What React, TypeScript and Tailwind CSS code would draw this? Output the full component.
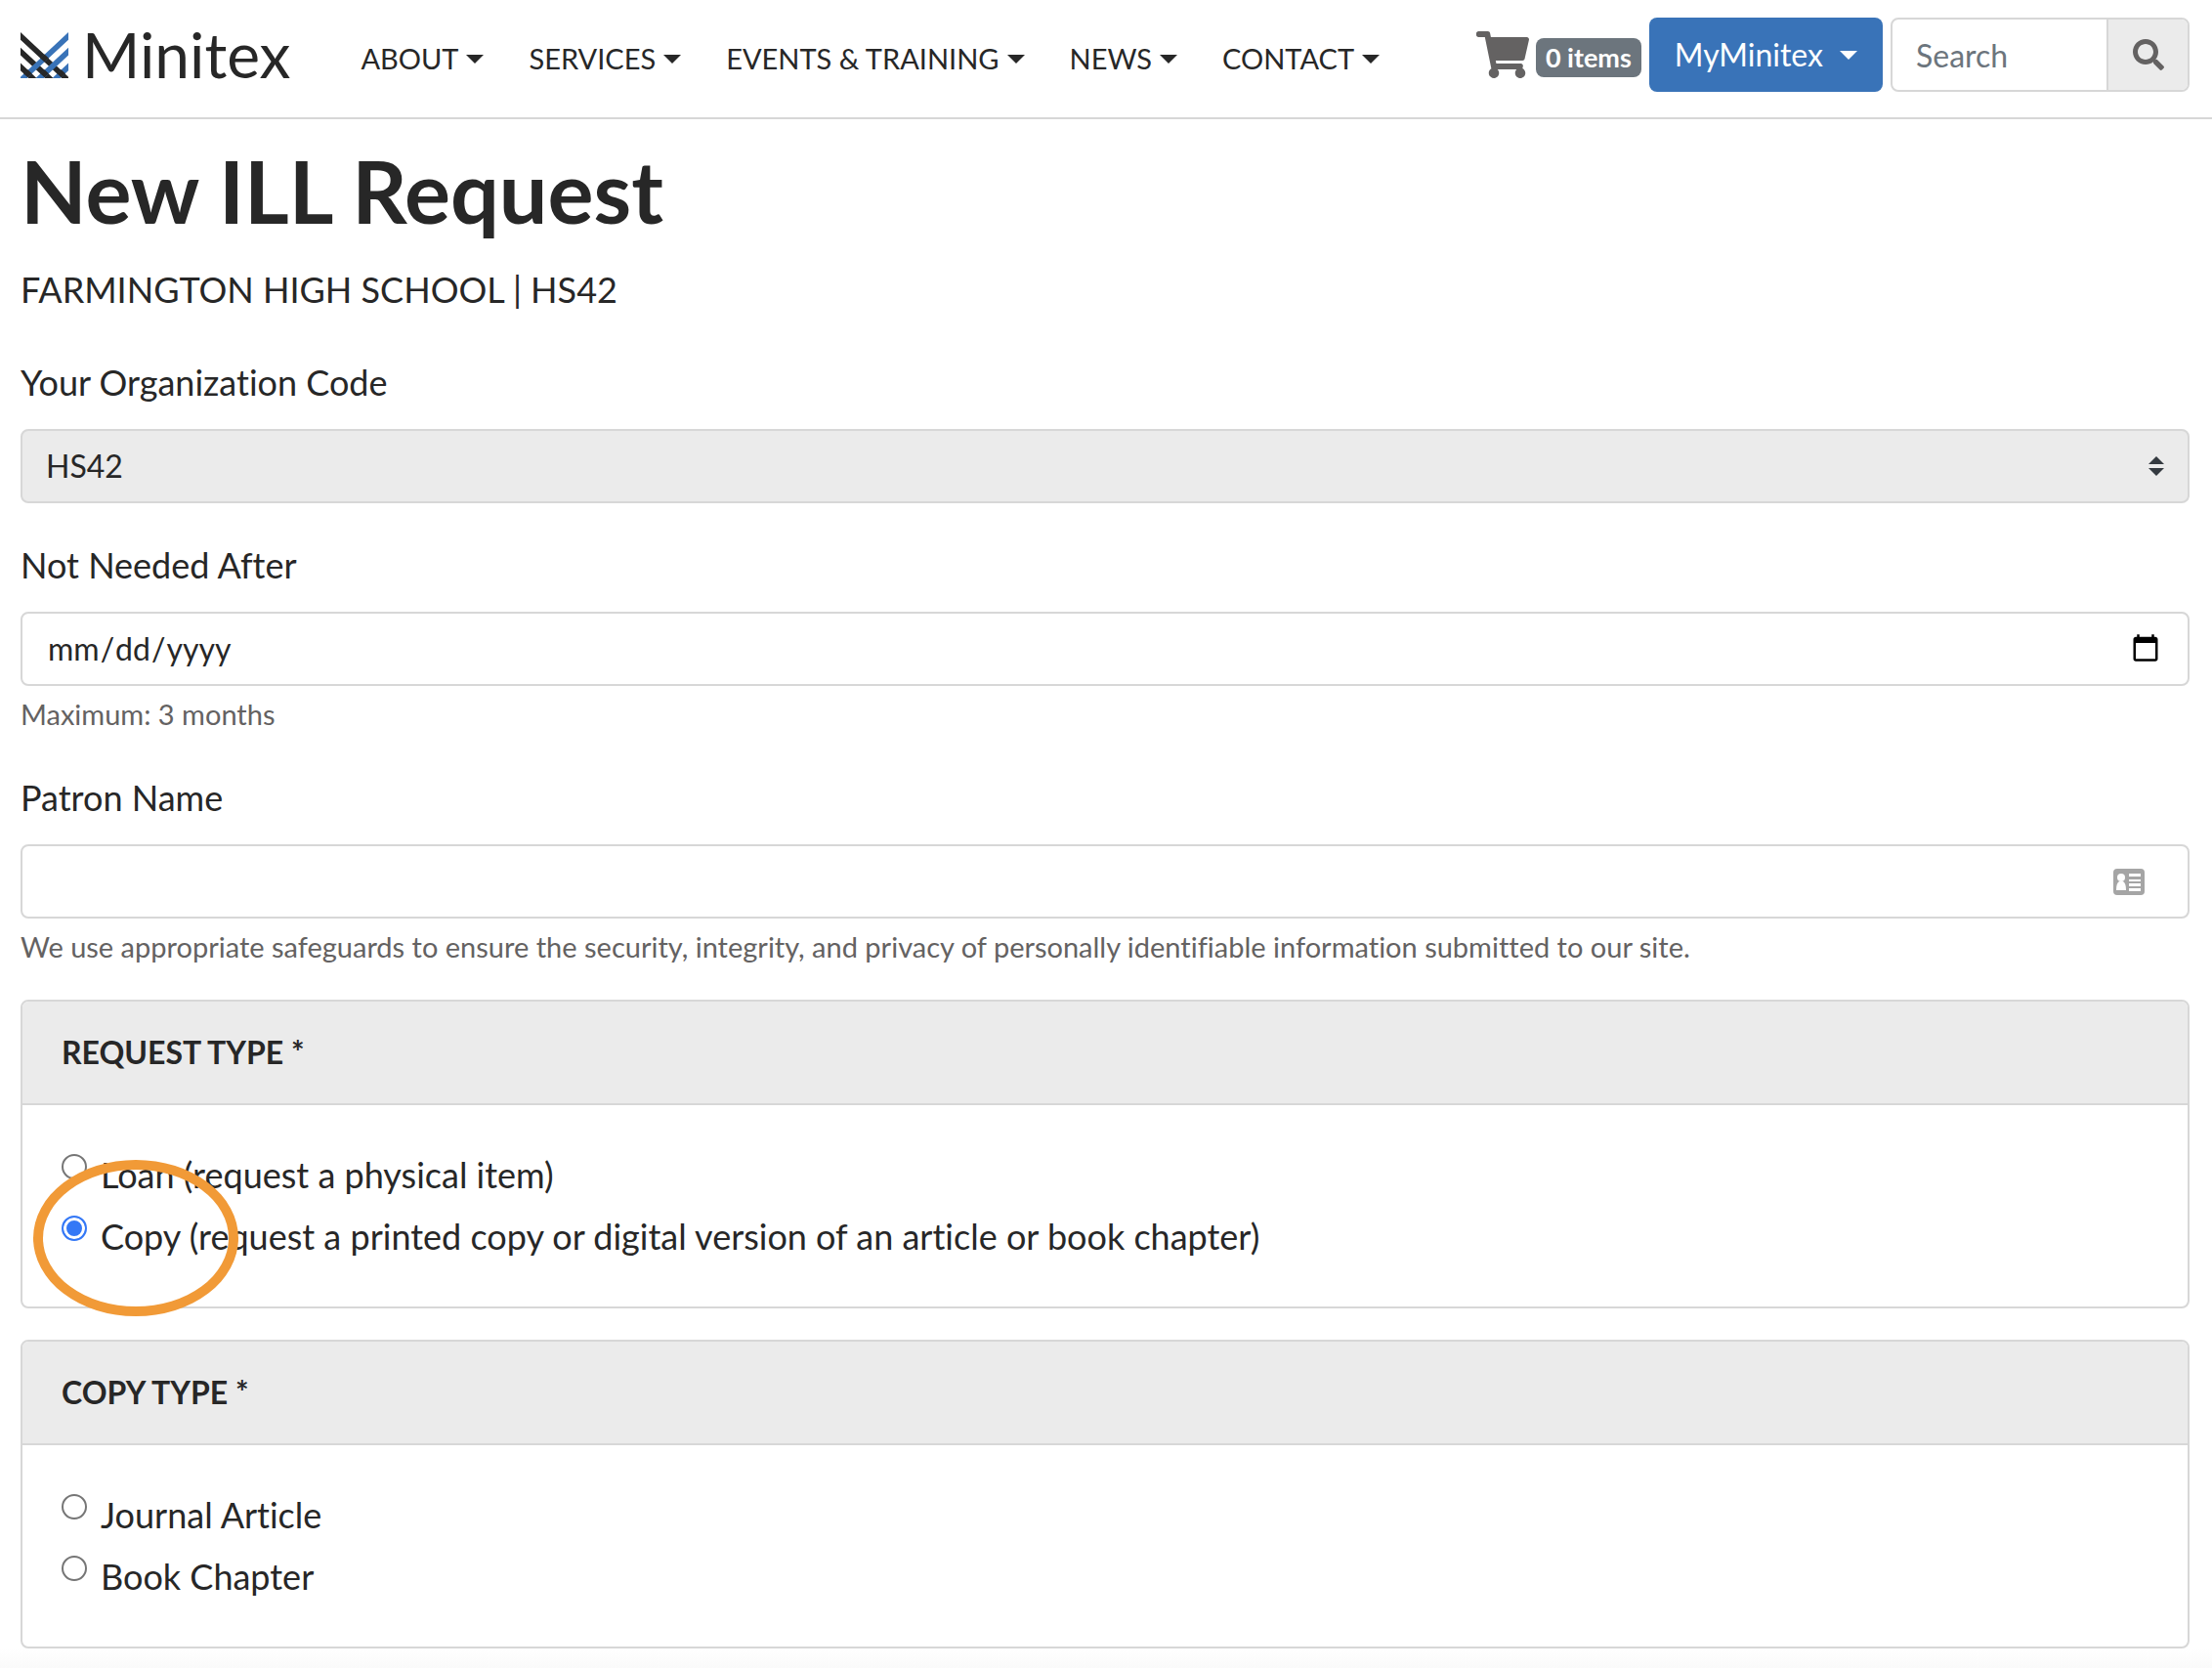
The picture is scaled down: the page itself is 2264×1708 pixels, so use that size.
import React, { useState } from 'react';
import { FaShoppingCart, FaSearch } from 'react-icons/fa';

const NAV_ITEMS = ['ABOUT', 'SERVICES', 'EVENTS & TRAINING', 'NEWS', 'CONTACT'];

const REQUEST_TYPES = [
  { value: 'loan', label: 'Loan (request a physical item)' },
  { value: 'copy', label: 'Copy (request a printed copy or digital version of an article or book chapter)' },
];

const COPY_TYPES = [
  { value: 'journal', label: 'Journal Article' },
  { value: 'chapter', label: 'Book Chapter' },
];

const Caret: React.FC = () => (
  <svg viewBox="0 0 18 9" className="w-[18px] h-[9px]" fill="currentColor" aria-hidden="true">
    <path d="M0 0h18L9 9z" />
  </svg>
);

const LogoMark: React.FC = () => (
  <svg viewBox="0 0 146 140" className="w-[49px] h-[47px]" aria-hidden="true">
    {/* black strands, blue strands over them, then the crossings where black is back on top */}
    <path fill="#272727" d="M0 0L146 136V140H126L0 23zM0 47L100 140H75L0 70zM0 94L49 140H25L0 117z" />
    <path fill="#3973b8" d="M146 0L0 136V140H20L146 23zM146 47L46 140H71L146 70zM146 94L97 140H121L146 117z" />
    <path
      fill="#272727"
      d="M73 67L86 79L73 91L60 79zM73 114L86 126L73 138L60 126zM22 114L35 126L22 138L9 126zM124 114L137 126L124 138L111 126z"
    />
  </svg>
);

const IdCardIcon: React.FC = () => (
  <svg viewBox="0 0 32 27" className="w-8 h-[27px]" aria-hidden="true">
    <rect width="32" height="27" rx="4" fill="#a5a5a5" />
    <g fill="#fff">
      <circle cx="8" cy="9" r="4" />
      <path d="M3 22c0-5 1-8 3-9h4c2 1 3 4 3 9z" />
      <path d="M16 5h12v3H16zM16 11h12v2H16zM16 15h12v3H16zM16 20h12v3H16z" />
    </g>
  </svg>
);

interface RadioCardProps {
  title: string;
  name: string;
  options: { value: string; label: string }[];
  value: string;
  onChange: (value: string) => void;
  children?: React.ReactNode;
}

const RadioCard: React.FC<RadioCardProps> = ({ title, name, options, value, onChange, children }) => (
  <section role="radiogroup" aria-label={title} className="relative mt-8 border-2 border-[#d7d7d7] rounded-lg">
    <h2 className="px-10 py-7 rounded-t-md bg-[#ebebeb] border-b-2 border-[#d7d7d7] text-[32px] leading-12 font-bold">
      {title}
    </h2>
    <div className="p-10">
      {options.map((option) => (
        <label key={option.value} className="flex items-start gap-[14px] text-4xl leading-[63px]">
          <input
            type="radio"
            name={name}
            value={option.value}
            checked={value === option.value}
            onChange={() => onChange(option.value)}
            className="appearance-none shrink-0 mt-[10px] size-[26px] rounded-full border-2 border-[#767676] bg-white checked:border-[#3478f6] checked:bg-[#3478f6] checked:inset-shadow-[0_0_0_3px_#fff]"
          />
          {option.label}
        </label>
      ))}
    </div>
    {children}
  </section>
);

const App: React.FC = () => {
  const [requestType, setRequestType] = useState('copy');
  const [copyType, setCopyType] = useState('');

  return (
    <div className="min-h-screen bg-white text-[#272727] font-[Lato,sans-serif] [font-variant-ligatures:none]">
      {/* Header */}
      <header className="flex items-center justify-between pl-[21px] pr-[23px] pt-[18px] pb-[26px] border-b-2 border-[#d7d7d7]">
        <div className="flex items-center">
          <a href="#" className="flex items-center gap-[14px] h-[76px]">
            <LogoMark />
            <span className="text-[64px] leading-[76px]">Minitex</span>
          </a>
          <nav className="flex items-center gap-[46px] ml-[72px] pt-2 text-[29px] leading-11">
            {NAV_ITEMS.map((item) => (
              <a key={item} href="#" className="flex items-center gap-2 whitespace-nowrap">
                {item}
                <Caret />
              </a>
            ))}
          </nav>
        </div>
        <div className="flex items-center gap-2">
          <a href="#" className="flex items-center gap-[7px]">
            <FaShoppingCart className="w-[54px] h-12 text-[#646262]" />
            <span className="mt-1.5 px-[10px] rounded-lg bg-[#6c757d] text-white text-[27px] leading-10 font-bold">0 items</span>
          </a>
          <button type="button" className="flex items-center gap-[17px] h-[76px] px-[26px] rounded-lg bg-[#3973b8] text-white text-[32px]">
            MyMinitex
            <Caret />
          </button>
          <form className="flex h-[76px] border-2 border-[#d7d7d7] rounded-lg" onSubmit={(e) => e.preventDefault()}>
            <input
              type="search"
              aria-label="Search"
              placeholder="Search"
              className="w-[219px] px-6 pt-0.5 rounded-l-md text-[32px] placeholder:text-[#6c757d]"
            />
            <button type="submit" aria-label="Submit search" className="flex items-center justify-center w-[83px] rounded-r-md border-l-2 border-[#d7d7d7] bg-[#ebebeb]">
              <FaSearch className="size-8 text-[#646262]" />
            </button>
          </form>
        </div>
      </header>

      {/* Request form */}
      <main className="pl-[21px] pr-[23px] pt-[19px]">
        <h1 className="text-[88px] leading-[108px] font-bold">New ILL Request</h1>
        <p className="mt-5 mb-[41px] text-4xl leading-[54px]">FARMINGTON HIGH SCHOOL | HS42</p>

        <div className="mb-9">
          <label htmlFor="org-code" className="block mb-[21px] text-4xl leading-[54px]">Your Organization Code</label>
          <div className="relative">
            <select
              id="org-code"
              className="block w-full h-[76px] px-6 appearance-none border-2 border-[#d7d7d7] rounded-lg bg-[#ebebeb] text-[32px]"
            >
              <option>HS42</option>
            </select>
            <svg viewBox="0 0 4 5" className="absolute right-[26px] inset-y-0 my-auto w-4 h-5 pointer-events-none" fill="#343a40" aria-hidden="true">
              <path d="M2 0L0 2h4zm0 5L0 3h4z" />
            </svg>
          </div>
        </div>

        <div className="mb-9">
          <label htmlFor="needed-by" className="block mb-[21px] text-4xl leading-[54px]">Not Needed After</label>
          <input
            id="needed-by"
            type="date"
            className="block w-full h-[76px] px-[25px] border-2 border-[#d7d7d7] rounded-lg bg-white text-[32px]"
          />
          <p className="mt-[7px] text-[29px] leading-11 text-[#646262]">Maximum: 3 months</p>
        </div>

        <div>
          <label htmlFor="patron" className="block mb-[21px] text-4xl leading-[54px]">Patron Name</label>
          <div className="flex items-center h-[76px] pr-11 border-2 border-[#d7d7d7] rounded-lg">
            <input id="patron" type="text" className="flex-1 h-full px-6 text-[32px] rounded-lg" />
            <IdCardIcon />
          </div>
          <p className="mt-[7px] text-[29px] leading-11 text-[#646262]">
            We use appropriate safeguards to ensure the security, integrity, and privacy of personally identifiable information submitted to our site.
          </p>
        </div>

        <RadioCard title="REQUEST TYPE *" name="request-type" options={REQUEST_TYPES} value={requestType} onChange={setRequestType}>
          <div className="absolute left-[11px] -bottom-[10px] w-[210px] h-[160px] rounded-[50%] border-10 border-[#f19a37] pointer-events-none" />
        </RadioCard>
        <RadioCard title="COPY TYPE *" name="copy-type" options={COPY_TYPES} value={copyType} onChange={setCopyType} />
      </main>
      <div className="h-5 bg-linear-to-b from-white to-[#fafafa]" />
    </div>
  );
};

export default App;
